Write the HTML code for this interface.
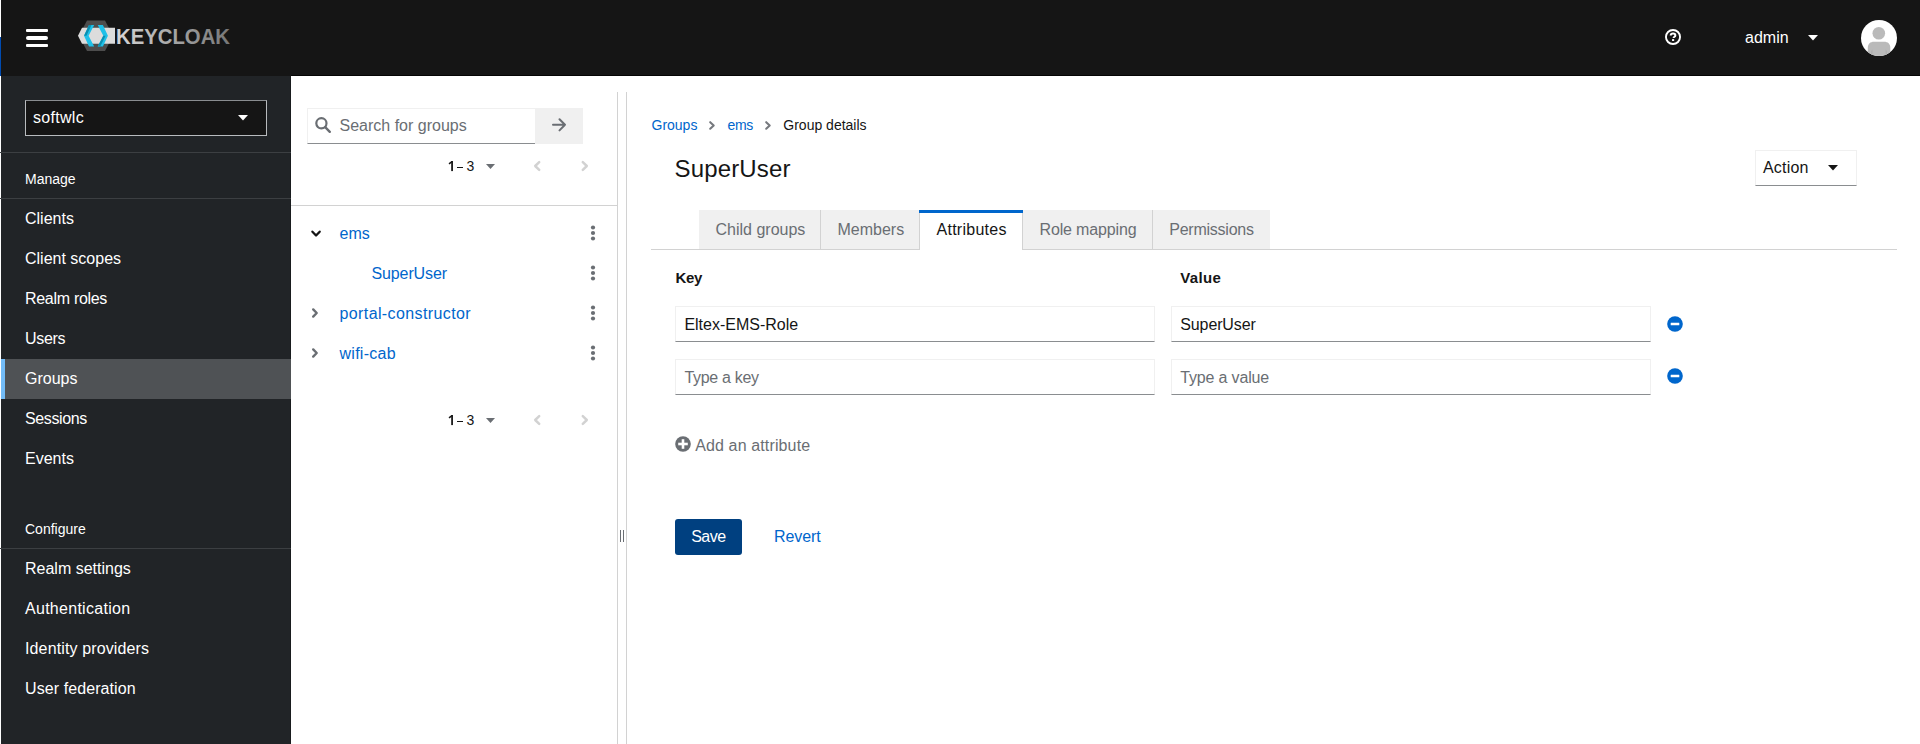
<!DOCTYPE html>
<html><head><meta charset="utf-8">
<style>
*{box-sizing:border-box;margin:0;padding:0}
html,body{width:1920px;height:744px;overflow:hidden;background:#fff;font-family:"Liberation Sans",sans-serif;color:#151515}
.a{position:absolute}
.t{position:absolute;white-space:nowrap;line-height:1;font-size:16px}
.s14{font-size:14px}
.w{color:#fff}
.g{color:#6a6e73}
.b{color:#0066cc}
#hdr{left:0;top:0;width:1920px;height:76px;background:#151515}
#side{left:0;top:76px;width:291px;height:668px;background:#212427}
.dv{left:0;width:291px;height:1px;background:#3c3f42}
.ln{background:#d2d2d2}
svg{position:absolute;overflow:visible}
</style></head><body>
<!-- header -->
<div id="hdr" class="a"></div>
<div class="a" style="left:0;top:0;width:1px;height:37px;background:#fff"></div>
<div class="a" style="left:0;top:37px;width:1px;height:39px;background:#004bb0"></div>
<!-- hamburger -->
<div class="a" style="left:26px;top:29px;width:22px;height:3px;background:#fff;border-radius:1px"></div>
<div class="a" style="left:26px;top:36px;width:22px;height:4px;background:#fff;border-radius:2px"></div>
<div class="a" style="left:26px;top:44px;width:22px;height:3px;background:#fff;border-radius:1px"></div>
<!-- logo -->
<svg style="left:0;top:0" width="240" height="76">
  <defs>
    <linearGradient id="kg" x1="0" x2="1" y1="0" y2="0">
      <stop offset="0" stop-color="#d6d6d6"/><stop offset="1" stop-color="#767676"/>
    </linearGradient>
  </defs>
  <polygon points="87,20.5 105,20.5 113,35.7 105,51 87,51 79,35.7" fill="#4d4d4d"/>
  <polygon points="82,27.7 115,27.7 115,43.8 82,43.8 78,35.75" fill="#dcdcdc"/>
  <polygon points="89,25 94.2,25 88.6,35.7 94.2,46.4 89,46.4 84,35.7" fill="#1fc0e8"/>
  <polygon points="89,25 91.5,25 86.5,35.7 84,35.7" fill="#0a8fb0"/>
  <polygon points="97.7,25 102.9,25 107.9,35.7 102.9,46.4 97.7,46.4 103.3,35.7" fill="#1fc0e8"/>
  <polygon points="103.3,35.7 105.6,35.7 100.3,46.4 97.7,46.4" fill="#0a8fb0"/>
  <text x="116" y="44" font-family="Liberation Sans" font-weight="bold" font-size="22.8" textLength="114" lengthAdjust="spacingAndGlyphs" fill="url(#kg)">KEYCLOAK</text>
</svg>
<!-- help icon -->
<svg style="left:1665px;top:29px" width="16" height="16" viewBox="0 0 16 16">
  <circle cx="8" cy="8" r="7.05" fill="none" stroke="#fff" stroke-width="1.9"/>
  <path d="M5.7,6.5 C5.7,5.2 6.7,4.6 8.05,4.6 C9.5,4.6 10.35,5.35 10.35,6.4 C10.35,7.8 8.6,7.7 8.6,9.1" fill="none" stroke="#fff" stroke-width="2"/>
  <rect x="7.05" y="10.1" width="2.1" height="1.9" fill="#fff"/>
</svg>
<div class="t w" style="left:1745px;top:30px">admin</div>
<svg style="left:1808px;top:35px" width="10" height="6" viewBox="0 0 10 6"><polygon points="0,0 10,0 5,5.6" fill="#fff"/></svg>
<!-- avatar -->
<svg style="left:1861px;top:20px" width="36" height="36" viewBox="0 0 36 36">
  <defs><clipPath id="cc"><circle cx="18" cy="18" r="18"/></clipPath></defs>
  <circle cx="18" cy="18" r="18" fill="#fff"/>
  <g clip-path="url(#cc)">
    <circle cx="17.8" cy="13.3" r="6.3" fill="#bababa"/>
    <path d="M6.8,37 L6.8,27.7 C6.8,23.8 9.2,21.7 13,21.7 L23.1,21.7 C26.9,21.7 29.3,23.8 29.3,27.7 L29.3,37 Z" fill="#bababa"/>
    <path d="M10.2,37 L10.2,32 C10.2,31 10.8,30 11.5,29.5 L11.5,37 Z" fill="#adadad"/>
    <path d="M25.9,37 L25.9,32 C25.9,31 25.3,30 24.6,29.5 L24.6,37 Z" fill="#adadad"/>
  </g>
</svg>
<div class="a" style="left:291px;top:75px;width:1629px;height:1px;background:#050505"></div>
<!-- sidebar -->
<div id="side" class="a"></div>
<div class="a" style="left:0;top:76px;width:1px;height:668px;background:#fff"></div>
<div class="a" style="left:290px;top:76px;width:1px;height:668px;background:rgba(0,0,0,0.22)"></div>
<div class="a" style="left:25px;top:100px;width:242px;height:36px;background:#151515;border:1px solid #b8bbbe;border-top-color:#8a8d90"></div>
<div class="t w" style="left:33px;top:109.5px;letter-spacing:0.3px">softwlc</div>
<svg style="left:238px;top:115px" width="10" height="6" viewBox="0 0 10 6"><polygon points="0,0 10,0 5,5.5" fill="#fff"/></svg>
<div class="a dv" style="top:152px"></div>
<div class="t s14 w" style="left:25px;top:172px">Manage</div>
<div class="a dv" style="top:198px"></div>
<div class="t w" style="left:25px;top:210.5px">Clients</div>
<div class="t w" style="left:25px;top:250.5px">Client scopes</div>
<div class="t w" style="left:25px;top:290.5px;letter-spacing:-0.3px">Realm roles</div>
<div class="t w" style="left:25px;top:330.5px;letter-spacing:-0.3px">Users</div>
<div class="a" style="left:1px;top:359px;width:290px;height:40px;background:#4f5255;border-left:4px solid #73bcf7"></div>
<div class="t w" style="left:25px;top:370.5px">Groups</div>
<div class="t w" style="left:25px;top:410.5px;letter-spacing:-0.37px">Sessions</div>
<div class="t w" style="left:25px;top:450.5px">Events</div>
<div class="t s14 w" style="left:25px;top:522px">Configure</div>
<div class="a dv" style="top:548px"></div>
<div class="t w" style="left:25px;top:560.5px">Realm settings</div>
<div class="t w" style="left:25px;top:600.5px;letter-spacing:0.28px">Authentication</div>
<div class="t w" style="left:25px;top:640.5px;letter-spacing:0.13px">Identity providers</div>
<div class="t w" style="left:25px;top:680.5px;letter-spacing:0.09px">User federation</div>

<!-- groups panel -->
<div class="a" style="left:307px;top:108px;width:228px;height:36px;border:1px solid #f0f0f0;border-bottom-color:#8a8d90;border-right:none"></div>
<svg style="left:315px;top:117px" width="16" height="16" viewBox="0 0 16 16">
  <circle cx="6.4" cy="6.3" r="5.1" fill="none" stroke="#6a6e73" stroke-width="2.2"/>
  <line x1="10.2" y1="10.2" x2="14.8" y2="14.8" stroke="#6a6e73" stroke-width="2.4" stroke-linecap="round"/>
</svg>
<div class="t g" style="left:339.5px;top:117.5px">Search for groups</div>
<div class="a" style="left:535px;top:108px;width:48px;height:36px;background:#f0f0f0"></div>
<svg style="left:552px;top:118px" width="14" height="14" viewBox="0 0 14 14">
  <path d="M1,6.8 L13,6.8 M7.5,1.2 L13,6.8 L7.5,12.4" fill="none" stroke="#6a6e73" stroke-width="2" stroke-linecap="round" stroke-linejoin="round"/>
</svg>
<svg style="left:448px;top:160.8px" width="7" height="11" viewBox="0 0 7 11"><rect x="3.2" y="0" width="1.75" height="10.1" fill="#151515"/><path d="M4,0.7 L1,2.9" stroke="#151515" stroke-width="1.5"/></svg><div class="a" style="left:457.2px;top:166.9px;width:5.5px;height:1.25px;background:#151515"></div><div class="t s14" style="left:466.5px;top:159.0px">3</div>
<svg style="left:485.7px;top:164.2px" width="9" height="5" viewBox="0 0 9 5"><polygon points="0,0 9,0 4.5,5" fill="#6a6e73"/></svg>
<svg style="left:533px;top:161px" width="8" height="10" viewBox="0 0 8 10"><path d="M6.2,1.2 L2.2,5 L6.2,8.8" fill="none" stroke="#d2d2d2" stroke-width="2.5" stroke-linecap="round" stroke-linejoin="round"/></svg>
<svg style="left:581px;top:161px" width="8" height="10" viewBox="0 0 8 10"><path d="M1.8,1.2 L5.8,5 L1.8,8.8" fill="none" stroke="#d2d2d2" stroke-width="2.5" stroke-linecap="round" stroke-linejoin="round"/></svg>
<div class="a ln" style="left:291px;top:205px;width:326px;height:1px"></div>

<svg style="left:311px;top:230px" width="11" height="8" viewBox="0 0 11 8"><path d="M1.4,1.7 L5.05,5.5 L8.7,1.7" fill="none" stroke="#151515" stroke-width="2.3" stroke-linecap="round" stroke-linejoin="round"/></svg>
<div class="t b" style="left:339.5px;top:225.5px">ems</div>
<div class="t b" style="left:371.5px;top:266px;letter-spacing:-0.12px">SuperUser</div>
<svg style="left:311px;top:308px" width="8" height="11" viewBox="0 0 8 11"><path d="M2.2,1.4 L5.7,5 L2.2,8.6" fill="none" stroke="#6a6e73" stroke-width="2.4" stroke-linecap="round" stroke-linejoin="round"/></svg>
<div class="t b" style="left:339.5px;top:305.7px;letter-spacing:0.39px">portal-constructor</div>
<svg style="left:311px;top:348px" width="8" height="11" viewBox="0 0 8 11"><path d="M2.2,1.4 L5.7,5 L2.2,8.6" fill="none" stroke="#6a6e73" stroke-width="2.4" stroke-linecap="round" stroke-linejoin="round"/></svg>
<div class="t b" style="left:339.5px;top:345.5px;letter-spacing:0.27px">wifi-cab</div>
<!-- kebabs -->
<svg style="left:590px;top:225px" width="6" height="16" viewBox="0 0 6 16"><circle cx="3" cy="2.5" r="2.1" fill="#6a6e73"/><circle cx="3" cy="8" r="2.1" fill="#6a6e73"/><circle cx="3" cy="13.5" r="2.1" fill="#6a6e73"/></svg>
<svg style="left:590px;top:265px" width="6" height="16" viewBox="0 0 6 16"><circle cx="3" cy="2.5" r="2.1" fill="#6a6e73"/><circle cx="3" cy="8" r="2.1" fill="#6a6e73"/><circle cx="3" cy="13.5" r="2.1" fill="#6a6e73"/></svg>
<svg style="left:590px;top:305px" width="6" height="16" viewBox="0 0 6 16"><circle cx="3" cy="2.5" r="2.1" fill="#6a6e73"/><circle cx="3" cy="8" r="2.1" fill="#6a6e73"/><circle cx="3" cy="13.5" r="2.1" fill="#6a6e73"/></svg>
<svg style="left:590px;top:345px" width="6" height="16" viewBox="0 0 6 16"><circle cx="3" cy="2.5" r="2.1" fill="#6a6e73"/><circle cx="3" cy="8" r="2.1" fill="#6a6e73"/><circle cx="3" cy="13.5" r="2.1" fill="#6a6e73"/></svg>

<svg style="left:448px;top:414.8px" width="7" height="11" viewBox="0 0 7 11"><rect x="3.2" y="0" width="1.75" height="10.1" fill="#151515"/><path d="M4,0.7 L1,2.9" stroke="#151515" stroke-width="1.5"/></svg><div class="a" style="left:457.2px;top:420.9px;width:5.5px;height:1.25px;background:#151515"></div><div class="t s14" style="left:466.5px;top:413.0px">3</div>
<svg style="left:485.7px;top:418.2px" width="9" height="5" viewBox="0 0 9 5"><polygon points="0,0 9,0 4.5,5" fill="#6a6e73"/></svg>
<svg style="left:533px;top:415px" width="8" height="10" viewBox="0 0 8 10"><path d="M6.2,1.2 L2.2,5 L6.2,8.8" fill="none" stroke="#d2d2d2" stroke-width="2.5" stroke-linecap="round" stroke-linejoin="round"/></svg>
<svg style="left:581px;top:415px" width="8" height="10" viewBox="0 0 8 10"><path d="M1.8,1.2 L5.8,5 L1.8,8.8" fill="none" stroke="#d2d2d2" stroke-width="2.5" stroke-linecap="round" stroke-linejoin="round"/></svg>

<!-- splitter -->
<div class="a ln" style="left:617px;top:92px;width:1px;height:652px"></div>
<div class="a ln" style="left:626px;top:92px;width:1px;height:652px"></div>
<div class="a" style="left:620px;top:530px;width:1px;height:12px;background:#6a6e73"></div>
<div class="a" style="left:623px;top:530px;width:1px;height:12px;background:#6a6e73"></div>

<!-- main -->
<div class="t s14 b" style="left:651.5px;top:117.5px">Groups</div>
<svg style="left:709px;top:120.5px" width="6" height="9" viewBox="0 0 6 9"><path d="M1.2,1.2 L4.7,4.45 L1.2,7.7" fill="none" stroke="#76797e" stroke-width="2.1" stroke-linecap="round" stroke-linejoin="round"/></svg>
<div class="t s14 b" style="left:727.5px;top:117.5px;letter-spacing:-0.4px">ems</div>
<svg style="left:765px;top:120.5px" width="6" height="9" viewBox="0 0 6 9"><path d="M1.2,1.2 L4.7,4.45 L1.2,7.7" fill="none" stroke="#76797e" stroke-width="2.1" stroke-linecap="round" stroke-linejoin="round"/></svg>
<div class="t s14" style="left:783.3px;top:117.5px">Group details</div>

<div class="t" style="left:674.5px;top:156.5px;font-size:24px;letter-spacing:0.15px">SuperUser</div>

<div class="a" style="left:1755px;top:150px;width:102px;height:36px;border:1px solid #f0f0f0;border-bottom-color:#8a8d90"></div>
<div class="t" style="left:1763px;top:160.4px;letter-spacing:0.2px">Action</div>
<svg style="left:1828px;top:165px" width="10" height="6" viewBox="0 0 10 6"><polygon points="0,0 10,0 5,5.5" fill="#151515"/></svg>

<!-- tabs -->
<div class="a ln" style="left:651px;top:249px;width:1246px;height:1px"></div>
<div class="a" style="left:699px;top:210px;width:220px;height:39px;background:#f0f0f0"></div>
<div class="a ln" style="left:820px;top:210px;width:1px;height:39px"></div>
<div class="a" style="left:919px;top:210px;width:104px;height:40px;background:#fff;border-left:1px solid #d2d2d2;border-right:1px solid #d2d2d2"></div>
<div class="a" style="left:919px;top:210px;width:104px;height:3px;background:#0066cc"></div>
<div class="a" style="left:1023px;top:210px;width:247px;height:39px;background:#f0f0f0"></div>
<div class="a ln" style="left:1152px;top:210px;width:1px;height:39px"></div>
<div class="t g" style="left:715.5px;top:222.3px">Child groups</div>
<div class="t g" style="left:837.5px;top:222.3px">Members</div>
<div class="t" style="left:936.5px;top:222.3px;letter-spacing:0.26px">Attributes</div>
<div class="t g" style="left:1039.5px;top:222.3px;letter-spacing:-0.15px">Role mapping</div>
<div class="t g" style="left:1169.3px;top:222.3px;letter-spacing:-0.25px">Permissions</div>

<!-- form -->
<div class="t" style="left:675.6px;top:270.3px;font-size:15px;font-weight:bold;letter-spacing:-0.35px">Key</div>
<div class="t" style="left:1180.3px;top:270.3px;font-size:15px;font-weight:bold;letter-spacing:0.35px">Value</div>
<div class="a" style="left:675px;top:306px;width:480px;height:36px;border:1px solid #f0f0f0;border-bottom-color:#8a8d90"></div>
<div class="a" style="left:1171px;top:306px;width:480px;height:36px;border:1px solid #f0f0f0;border-bottom-color:#8a8d90"></div>
<div class="t" style="left:684.4px;top:316.9px">Eltex-EMS-Role</div>
<div class="t" style="left:1180.3px;top:316.9px;letter-spacing:-0.13px">SuperUser</div>
<div class="a" style="left:675px;top:359px;width:480px;height:36px;border:1px solid #f0f0f0;border-bottom-color:#8a8d90"></div>
<div class="a" style="left:1171px;top:359px;width:480px;height:36px;border:1px solid #f0f0f0;border-bottom-color:#8a8d90"></div>
<div class="t g" style="left:684.4px;top:369.9px;letter-spacing:-0.3px">Type a key</div>
<div class="t g" style="left:1180.3px;top:369.9px;letter-spacing:-0.17px">Type a value</div>
<svg style="left:1667px;top:316px" width="16" height="16" viewBox="0 0 16 16"><circle cx="8" cy="8" r="7.8" fill="#0066cc"/><rect x="3.7" y="6.8" width="8.6" height="2.4" rx="0.3" fill="#fff"/></svg>
<svg style="left:1667px;top:368px" width="16" height="16" viewBox="0 0 16 16"><circle cx="8" cy="8" r="7.8" fill="#0066cc"/><rect x="3.7" y="6.8" width="8.6" height="2.4" rx="0.3" fill="#fff"/></svg>

<svg style="left:675px;top:436px" width="16" height="16" viewBox="0 0 16 16"><circle cx="8" cy="8" r="7.8" fill="#6a6e73"/><rect x="3.2" y="6.7" width="9.6" height="2.6" fill="#fff"/><rect x="6.7" y="3.2" width="2.6" height="9.6" fill="#fff"/></svg>
<div class="t g" style="left:695.2px;top:437.7px;letter-spacing:0.13px">Add an attribute</div>

<div class="a" style="left:675px;top:519px;width:67px;height:36px;background:#004080;border-radius:3px"></div>
<div class="t w" style="left:691.2px;top:529.4px;letter-spacing:-0.5px">Save</div>
<div class="t b" style="left:774px;top:529.4px;letter-spacing:-0.1px">Revert</div>
</body></html>
